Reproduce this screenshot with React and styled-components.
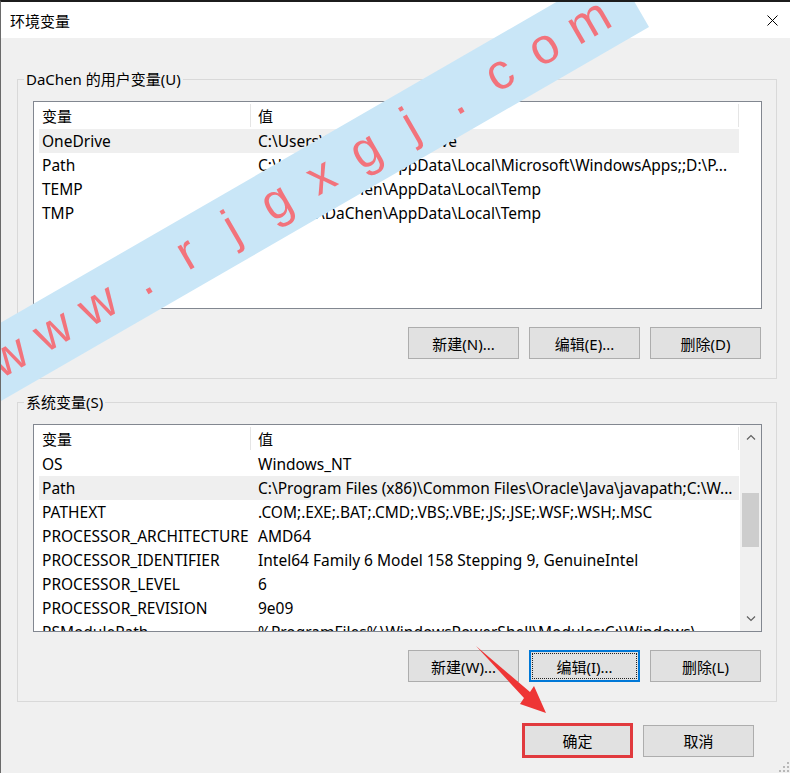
import React from 'react';
import styled, { createGlobalStyle } from 'styled-components';

const Global = createGlobalStyle`
  html, body { margin: 0; padding: 0; }
  body {
    width: 790px; height: 773px; overflow: hidden; background: #f0f0f0;
    font-family: "Noto Sans", "Noto Sans CJK SC", sans-serif;
    color: #000;
  }
`;

const Window = styled.div`
  position: relative;
  width: 790px;
  height: 773px;
  box-sizing: border-box;
  border-top: 2px solid #1c1c1c;
  border-left: 1px solid #6a6a6a;
  background: #f0f0f0;
  display: flex;
  flex-direction: column;
  overflow: hidden;
`;

const TitleBar = styled.header`
  height: 36px;
  flex: none;
  background: #fff;
  display: flex;
  align-items: center;
  justify-content: space-between;
  padding: 0 12px 0 9px;
  font-size: 15px;
`;

const CloseIcon = styled.svg`
  width: 11px;
  height: 11px;
  display: block;
`;

const Body = styled.main`
  flex: 1;
  display: flex;
  flex-direction: column;
  padding: 31px 0 0 16px;
`;

const Group = styled.fieldset`
  width: 760px;
  box-sizing: border-box;
  margin: 0;
  border: 1px solid #d9d9d9;
  padding: 12px 14px 19px 15px;
  min-inline-size: auto;
  & + & { margin-top: 13px; }
`;

const Legend = styled.legend`
  padding: 0 2px;
  margin-left: -9px;
  font-size: 15px;
  line-height: 20px;
`;

const ListBox = styled.div`
  height: 208px;
  box-sizing: border-box;
  border: 1px solid #828790;
  background: #fff;
  display: flex;
  overflow: hidden;
`;

const ListBody = styled.div`
  flex: 1;
  min-width: 0;
  padding-left: 5px;
  display: flex;
  flex-direction: column;
  overflow: hidden;
`;

const HeaderRow = styled.div`
  flex: none;
  height: 27px;
  box-sizing: border-box;
  padding: 2px 0;
  display: flex;
  font-size: 15px;
`;

const HeaderCell = styled.div`
  width: ${p => p.$w}px;
  box-sizing: border-box;
  padding-left: ${p => p.$pad}px;
  border-right: 1px solid #e5e5e5;
  display: flex;
  align-items: center;
`;

const Row = styled.div`
  flex: none;
  width: 700px;
  height: 24px;
  display: flex;
  background: ${p => (p.$active ? '#efefef' : 'transparent')};
  font-size: 15.5px;
  line-height: 24px;
`;

const Cell = styled.div`
  width: ${p => p.$w}px;
  box-sizing: border-box;
  padding-left: ${p => p.$pad}px;
  white-space: nowrap;
  overflow: hidden;
`;

const ScrollBar = styled.div`
  width: 21px;
  flex: none;
  background: #f0f0f0;
  display: flex;
  flex-direction: column;
`;

const ScrollArrow = styled.div`
  height: 24px;
  flex: none;
  display: flex;
  align-items: center;
  justify-content: center;
`;

const ScrollTrack = styled.div`
  flex: 1;
  padding: 44px 2px 0 2px;
`;

const Thumb = styled.div`
  height: 54px;
  background: #cdcdcd;
`;

const ButtonRow = styled.div`
  display: flex;
  justify-content: flex-end;
  gap: 10px;
  margin-top: 18px;
  padding-right: 1px;
`;

const Button = styled.button`
  width: 111px;
  height: ${p => (p.$marked ? 35 : 32)}px;
  box-sizing: border-box;
  margin: 0;
  padding: 0;
  background: #e1e1e1;
  border: ${p => (p.$marked ? '3px solid #e13a3e' : p.$focused ? '2px solid #0078d7' : '1px solid #adadad')};
  outline: ${p => (p.$focused ? '1px dotted #222' : 'none')};
  outline-offset: -4px;
  font-family: "Noto Sans", "Noto Sans CJK SC", sans-serif;
  font-size: 15px;
  color: #000;
`;

const Footer = styled.footer`
  display: flex;
  justify-content: flex-end;
  align-items: center;
  gap: 10px;
  margin-top: 21px;
  padding-right: 36px;
`;

const Band = styled.div`
  position: absolute;
  left: ${648 - 820}px;
  top: ${25 - 68}px;
  width: 820px;
  height: 68px;
  box-sizing: border-box;
  padding-right: 24px;
  transform-origin: 100% 100%;
  transform: rotate(-30deg);
  background: #c9e6f7;
  display: flex;
  justify-content: flex-end;
  align-items: flex-start;
  pointer-events: none;
`;

const BandChar = styled.span`
  width: 51.5px;
  flex: none;
  text-align: center;
  font-family: "Liberation Sans", Arial, sans-serif;
  font-size: 50px;
  line-height: 64px;
  color: #f2737c;
`;

const Overlay = styled.svg`
  position: absolute;
  left: 0;
  top: 0;
  width: 790px;
  height: 773px;
  pointer-events: none;
`;

const Grip = styled.svg`
  position: absolute;
  right: 1px;
  bottom: 1px;
  width: 11px;
  height: 11px;
`;

const userVars = [
  ['OneDrive', 'C:\\Users\\DaChen\\OneDrive', true],
  ['Path', 'C:\\Users\\DaChen\\AppData\\Local\\Microsoft\\WindowsApps;;D:\\P...'],
  ['TEMP', 'C:\\Users\\DaChen\\AppData\\Local\\Temp'],
  ['TMP', 'C:\\Users\\DaChen\\AppData\\Local\\Temp'],
];

const sysVars = [
  ['OS', 'Windows_NT'],
  ['Path', 'C:\\Program Files (x86)\\Common Files\\Oracle\\Java\\javapath;C:\\W...', true],
  ['PATHEXT', '.COM;.EXE;.BAT;.CMD;.VBS;.VBE;.JS;.JSE;.WSF;.WSH;.MSC'],
  ['PROCESSOR_ARCHITECTURE', 'AMD64'],
  ['PROCESSOR_IDENTIFIER', 'Intel64 Family 6 Model 158 Stepping 9, GenuineIntel'],
  ['PROCESSOR_LEVEL', '6'],
  ['PROCESSOR_REVISION', '9e09'],
  ['PSModulePath', '%ProgramFiles%\\WindowsPowerShell\\Modules;C:\\Windows\\...'],
];

function Chevron({ up }) {
  return (
    <svg width="10" height="6" viewBox="0 0 10 6">
      <polyline
        points={up ? '1,5.5 5,1.5 9,5.5' : '1,0.5 5,4.5 9,0.5'}
        fill="none"
        stroke="#606060"
        strokeWidth="1.2"
      />
    </svg>
  );
}

function VarList({ rows, scroll }) {
  return (
    <ListBox>
      <ListBody>
        <HeaderRow>
          <HeaderCell $w={212} $pad={3}>变量</HeaderCell>
          <HeaderCell $w={488} $pad={7}>值</HeaderCell>
        </HeaderRow>
        {rows.map(([k, v, active]) => (
          <Row key={k + v} $active={active}>
            <Cell $w={212} $pad={3}>{k}</Cell>
            <Cell $w={488} $pad={7}>{v}</Cell>
          </Row>
        ))}
      </ListBody>
      {scroll && (
        <ScrollBar>
          <ScrollArrow><Chevron up /></ScrollArrow>
          <ScrollTrack><Thumb /></ScrollTrack>
          <ScrollArrow><Chevron /></ScrollArrow>
        </ScrollBar>
      )}
    </ListBox>
  );
}

const watermark = 'www.rjgxgj.com'.split('');

export default function App() {
  return (
    <>
      <Global />
      <Window>
        <TitleBar>
          <span>环境变量</span>
          <CloseIcon viewBox="0 0 11 11">
            <path d="M0.5 0.5 L10.5 10.5 M10.5 0.5 L0.5 10.5" stroke="#000" strokeWidth="1" />
          </CloseIcon>
        </TitleBar>
        <Body>
          <Group>
            <Legend>DaChen 的用户变量(U)</Legend>
            <VarList rows={userVars} />
            <ButtonRow>
              <Button>新建(N)...</Button>
              <Button>编辑(E)...</Button>
              <Button>删除(D)</Button>
            </ButtonRow>
          </Group>
          <Group>
            <Legend>系统变量(S)</Legend>
            <VarList rows={sysVars} scroll />
            <ButtonRow>
              <Button>新建(W)...</Button>
              <Button $focused>编辑(I)...</Button>
              <Button>删除(L)</Button>
            </ButtonRow>
          </Group>
          <Footer>
            <Button $marked>确定</Button>
            <Button>取消</Button>
          </Footer>
        </Body>
        <Grip viewBox="0 0 11 11">
          {[[9, 1], [9, 5], [5, 5], [9, 9], [5, 9], [1, 9]].map(([x, y]) => (
            <rect key={x + '-' + y} x={x} y={y} width="2" height="2" fill="#b8b8b8" />
          ))}
        </Grip>
        <Band>
          {watermark.map((c, i) => (
            <BandChar key={i}>{c}</BandChar>
          ))}
        </Band>
        <Overlay viewBox="0 0 790 773">
          <polygon
            points="475,644 529,690 533,684 545,711 519,702 523,696"
            fill="#ee3535"
          />
        </Overlay>
      </Window>
    </>
  );
}
